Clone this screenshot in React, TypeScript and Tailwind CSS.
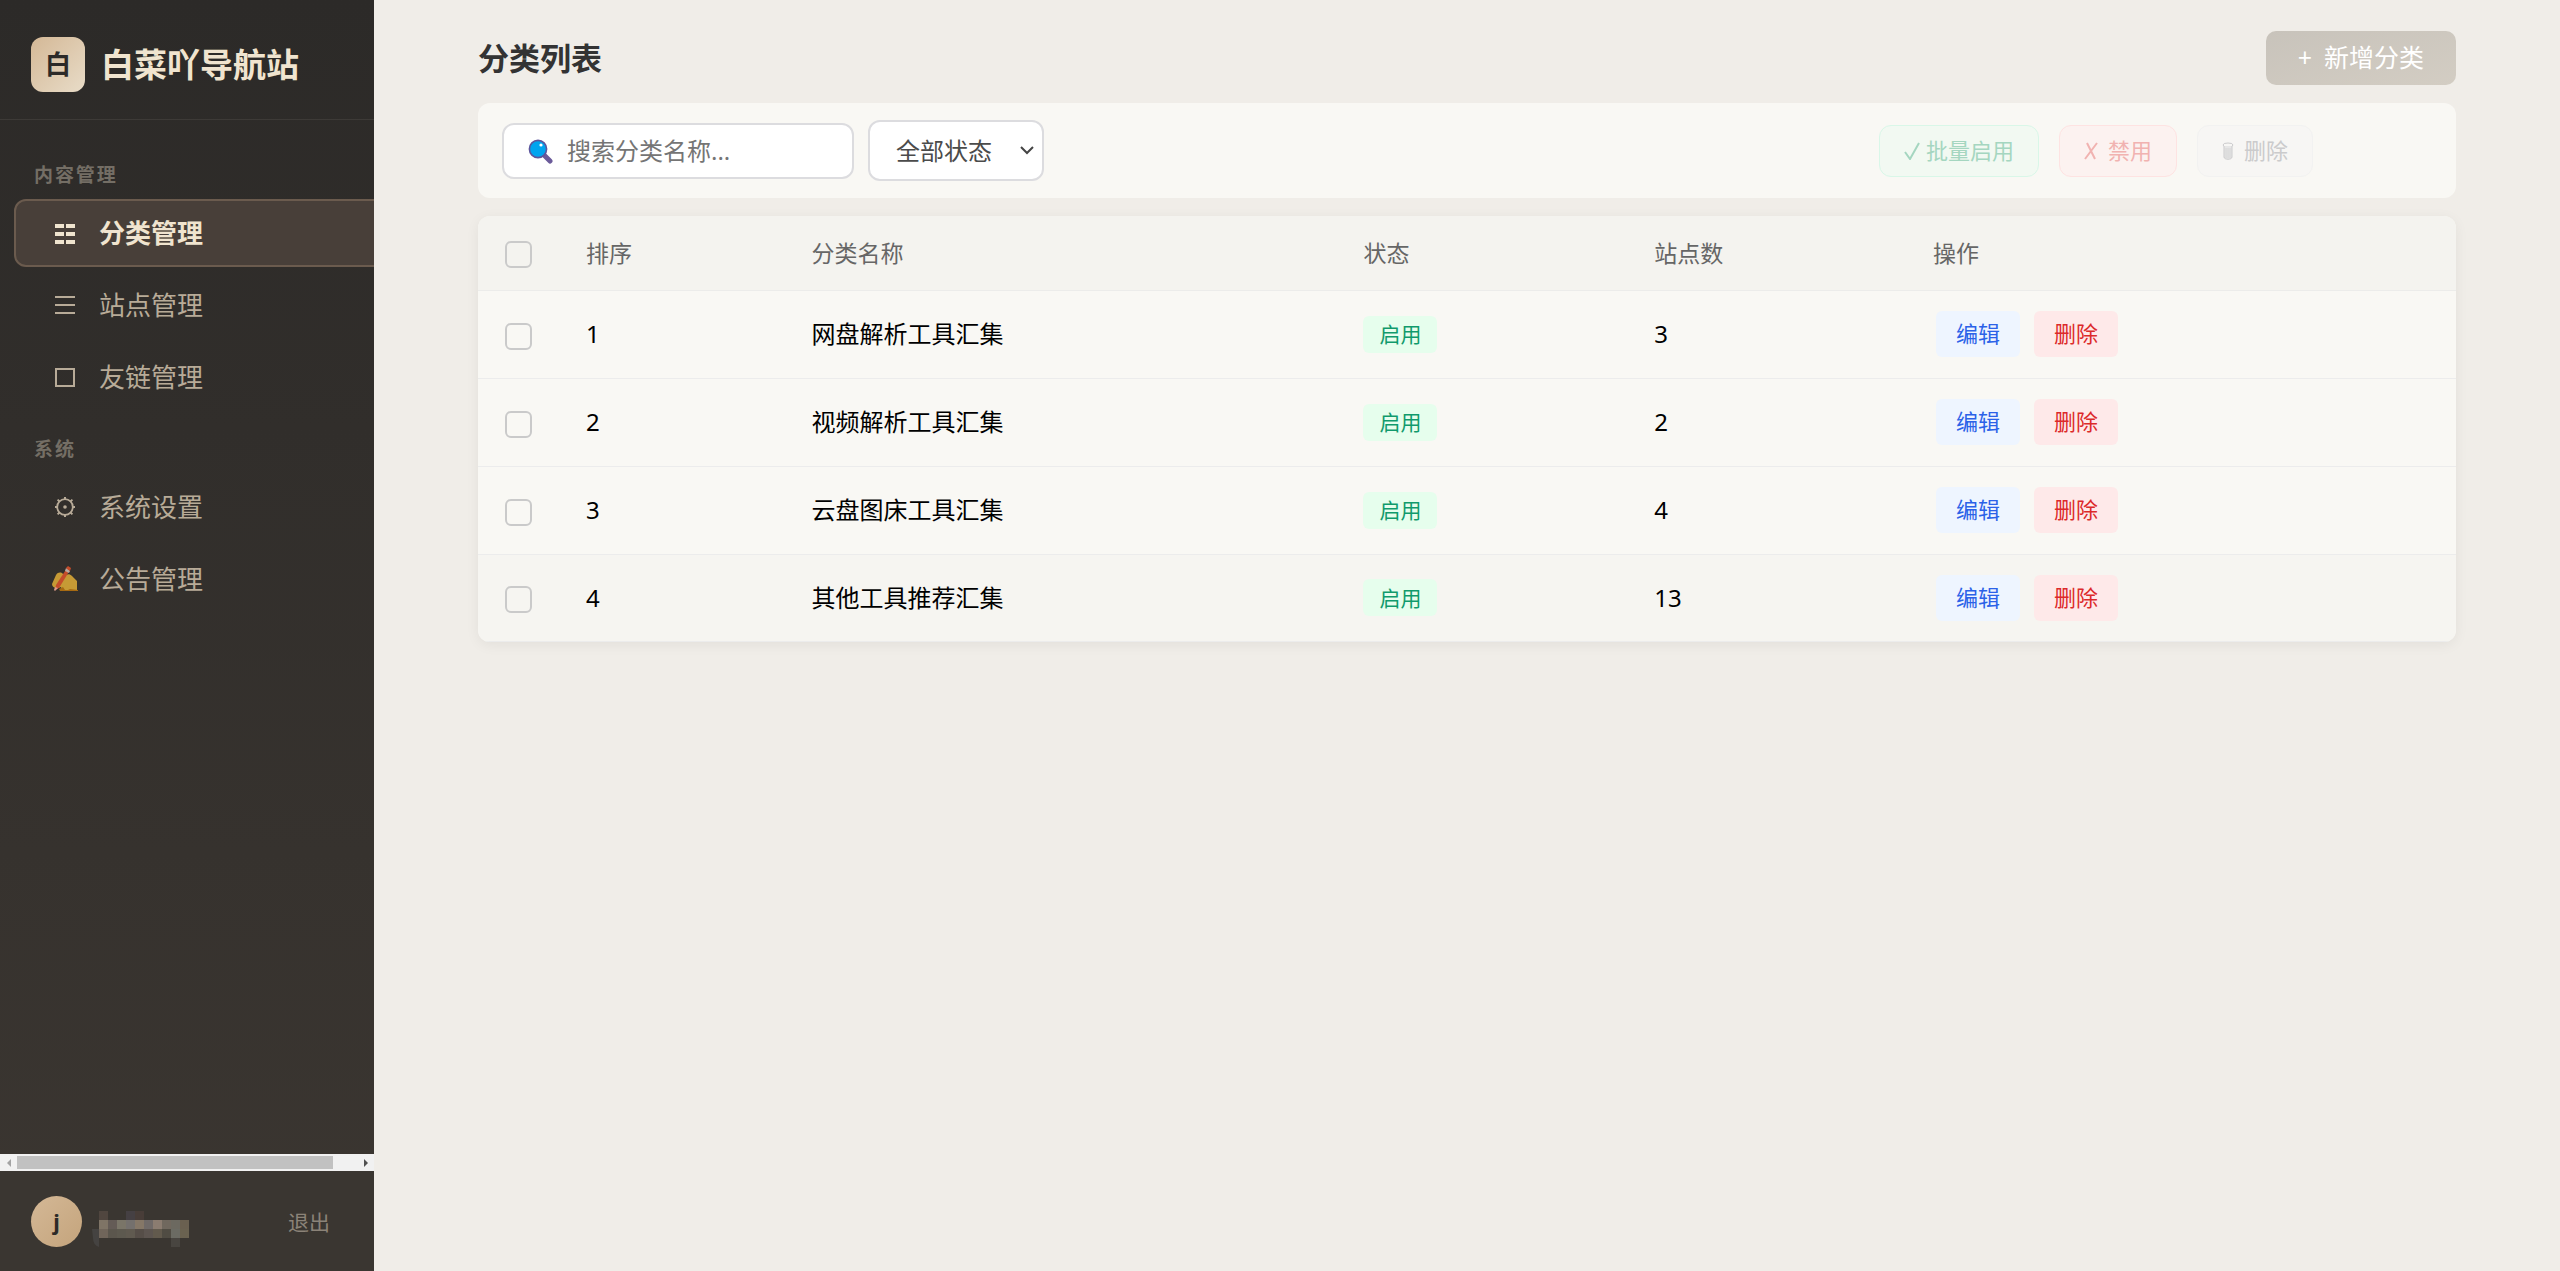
import { useState } from "react"
import type { ReactNode } from "react"

type Category = {
    id: number
    name: string
    sites: number
}

const categories: Category[] = [
    { id: 1, name: "网盘解析工具汇集", sites: 3 },
    { id: 2, name: "视频解析工具汇集", sites: 2 },
    { id: 3, name: "云盘图床工具汇集", sites: 4 },
    { id: 4, name: "其他工具推荐汇集", sites: 13 },
]

const CategoryIcon = () => (
    <svg viewBox="0 0 22 22" className="h-[22px] w-[22px]" fill="currentColor">
        <path d="M1 2h9v4H1zM12 2h9v4h-9zM1 10h9v4H1zM12 10h9v4h-9zM1 18h9v4H1zM12 18h9v4h-9z" />
    </svg>
)

const SiteIcon = () => (
    <svg viewBox="0 0 22 22" className="h-[22px] w-[22px]" fill="currentColor">
        <path d="M1 2h20v2H1zM1 10h20v2H1zM1 18h20v2H1z" />
    </svg>
)

const LinkIcon = () => (
    <svg viewBox="0 0 22 22" className="h-[22px] w-[22px]" fill="none" stroke="currentColor" strokeWidth="2">
        <path d="M2 3h18v17H2z" />
    </svg>
)

const SettingsIcon = () => (
    <svg viewBox="0 0 22 22" className="h-[22px] w-[22px]" fill="none" stroke="currentColor">
        <circle cx="11" cy="11" r="7.8" strokeWidth="1.8" />
        <circle cx="11" cy="11" r="1.8" fill="currentColor" stroke="none" />
        <path
            strokeWidth="2"
            d="M11 1v3M11 18v3M1 11h3M18 11h3M3.6 3.6l2 2M16.4 16.4l2 2M3.6 18.4l2-2M16.4 5.6l2-2"
        />
    </svg>
)

const NoticeIcon = () => (
    <svg viewBox="0 0 26 26" className="h-[26px] w-[26px]">
        <path d="M0 18L4 9c2-3 5-3 7-1l3 1c2-1 4-1 6 1l5 5v10H10l-1-4c-4 2-9 1-9-3z" fill="#c69a35" />
        <path d="M7 23l4-2 2 3h3l2-1 8 1v1H8z" fill="#a66a12" />
        <path d="M15 2l3 2L7 22l-4 2 1-5z" fill="#c44c2a" />
        <path d="M13 5l4 2 1-2-4-3z" fill="#b9a8a0" />
        <path d="M16 0l3 2-1 3-4-3z" fill="#c44c2a" />
        <path d="M3 21l3 1-3 3-1-1z" fill="#dc9a88" />
    </svg>
)

const SearchIcon = () => (
    <svg viewBox="0 0 26 26" className="h-[26px] w-[26px]">
        <path d="M16 17l6 6" stroke="#6b5b9a" strokeWidth="5" strokeLinecap="round" />
        <circle cx="10" cy="11" r="8.6" fill="#00a4ef" stroke="#5c559c" strokeWidth="1.6" />
        <circle cx="13" cy="7" r="1.6" fill="#fff" />
    </svg>
)

const TrashIcon = () => (
    <svg viewBox="0 0 12 18" className="h-[18px] w-3" fill="none" stroke="currentColor">
        <ellipse cx="6" cy="3" rx="5" ry="2" />
        <path d="M2 4v11c0 3 8 3 8 0V4" fill="#e6e6e6" />
        <path d="M4 6v10M6 6v10M8 6v10" strokeOpacity="0.6" />
    </svg>
)

const NavGroup = ({ title, children }: { title: string; children: ReactNode }) => (
    <section>
        <h2 className="mb-2.5 pl-5 text-[19px] leading-7 font-bold tracking-widest text-[#746e65]">{title}</h2>
        <ul className="flex flex-col gap-1">{children}</ul>
    </section>
)

const NavItem = ({ icon, label, active = false }: { icon: ReactNode; label: string; active?: boolean }) => (
    <li>
        <a
            href="#"
            aria-current={active ? "page" : undefined}
            className={
                active
                    ? "flex h-[68px] items-center rounded-xl border-2 border-[#6b5b4e] bg-[#483f39] pl-[33px] text-[26px] font-bold text-[#f0e4cf]"
                    : "flex h-[68px] items-center rounded-xl border-2 border-transparent pl-[33px] text-[26px] text-[#b8ab98]"
            }
        >
            <span className="mr-[18px] flex w-8 justify-center">{icon}</span>
            {label}
        </a>
    </li>
)

// Mosaic over the account name, one entry per 9px tile
const mosaic = [
    ["#50463f", "", "", "#454043", "#483d38", "", "", "", "", ""],
    ["#7f7466", "#645b56", "#7a7568", "#74706d", "#857767", "#706a68", "#8b7c70", "#70685e", "#6c6960", "#6a6050"],
    ["#70655a", "#5b564d", "#5d594f", "#605a50", "#564e48", "#5d5550", "#625a4d", "#504c43", "#6b6b63", "#6a6250"],
    ["", "", "", "", "", "", "", "", "#484540", ""],
]

const AccountName = () => (
    <svg viewBox="0 0 97 36" className="h-9 w-[97px]" role="img" aria-label="用户名">
        <path d="M0 18h7v18Q1 34 1 27z" fill="#454341" />
        {mosaic.map((row, y) =>
            row.map((fill, x) => fill && <rect key={`${x}-${y}`} x={7 + x * 9} y={y * 9} width="9" height="9" fill={fill} />)
        )}
    </svg>
)

const Sidebar = () => (
    <aside className="flex w-[374px] shrink-0 flex-col overflow-hidden bg-linear-to-b from-[#2c2a28] to-[#3b3631]">
        <div className="flex h-[120px] items-center gap-4 border-b border-[#3d3a37] pt-2.5 pl-[31px]">
            <span className="flex h-[55px] w-[54px] items-center justify-center rounded-xl bg-linear-to-br from-[#d4b896] to-[#e8dcc8] text-[26px] font-bold text-[#2c2a28]">
                白
            </span>
            <span className="text-[33px] font-bold text-[#f0e4cf]">白菜吖导航站</span>
        </div>
        <nav className="-mr-7 flex flex-1 flex-col gap-6 pt-[41px] pl-3.5">
            <NavGroup title="内容管理">
                <NavItem icon={<CategoryIcon />} label="分类管理" active />
                <NavItem icon={<SiteIcon />} label="站点管理" />
                <NavItem icon={<LinkIcon />} label="友链管理" />
            </NavGroup>
            <NavGroup title="系统">
                <NavItem icon={<SettingsIcon />} label="系统设置" />
                <NavItem icon={<NoticeIcon />} label="公告管理" />
            </NavGroup>
        </nav>
        <div className="flex h-[17px] items-center bg-[#f1f1f1]">
            <button aria-label="向左滚动" className="flex w-[17px] justify-center text-[#a3a3a3]">
                <svg viewBox="0 0 4 8" className="h-2 w-1" fill="currentColor">
                    <path d="M4 0v8L0 4z" />
                </svg>
            </button>
            <div className="flex-1">
                <div className="h-[13px] w-[93%] bg-[#c1c1c1]" />
            </div>
            <button aria-label="向右滚动" className="flex w-[17px] justify-center text-[#505050]">
                <svg viewBox="0 0 4 8" className="h-2 w-1" fill="currentColor">
                    <path d="M0 0v8l4-4z" />
                </svg>
            </button>
        </div>
        <div className="flex h-[100px] items-center bg-[#3a3631] pr-11 pl-[31px]">
            <span className="flex h-[51px] w-[51px] items-center justify-center rounded-full bg-linear-to-br from-[#d4b896] to-[#c4a47c] text-[22px] font-bold text-[#2c2a28]">
                j
            </span>
            <div className="mt-4 ml-2.5">
                <AccountName />
            </div>
            <button className="mt-1 ml-auto text-[21px] text-[#8b8378]">退出</button>
        </div>
    </aside>
)

const Checkbox = ({ label, checked, onChange }: { label: string; checked: boolean; onChange: () => void }) => (
    <input
        type="checkbox"
        aria-label={label}
        checked={checked}
        onChange={onChange}
        className="mt-1 block h-[27px] w-[27px] appearance-none rounded-md border-2 border-[#cacaca] checked:bg-[#b8ab98]"
    />
)

const Toolbar = () => (
    <div className="flex h-[95px] items-center rounded-xl bg-[#f9f8f4] px-6">
        <label className="flex h-14 w-[352px] items-center rounded-xl border-2 border-[#dcdcdf] bg-white pl-6">
            <SearchIcon />
            <input
                type="text"
                aria-label="搜索分类名称"
                placeholder="搜索分类名称..."
                className="ml-[13px] min-w-0 flex-1 text-2xl outline-none placeholder:text-[#757575]"
            />
        </label>
        <div className="relative ml-3.5">
            <select
                aria-label="状态"
                className="h-[61px] w-44 appearance-none rounded-xl border-2 border-[#dcdcdf] bg-white pl-[26px] text-2xl text-[#4b4b4b]"
            >
                <option>全部状态</option>
                <option>启用</option>
                <option>禁用</option>
            </select>
            <svg
                viewBox="0 0 14 9"
                className="pointer-events-none absolute top-[26px] right-2.5 h-[9px] w-3.5"
                fill="none"
                stroke="#444"
                strokeWidth="2"
            >
                <path d="M1 1l6 6 6-6" />
            </svg>
        </div>
        <div className="mr-[119px] ml-auto flex gap-5 text-[22px]">
            <button
                disabled
                className="flex h-[52px] items-center gap-1.5 rounded-xl border border-[#d9f7e8] bg-[#f2f9f2] px-6 text-[#a5d6c0]"
            >
                <svg viewBox="0 0 16 18" className="h-[18px] w-4" fill="none" stroke="currentColor" strokeWidth="2">
                    <path d="M1 10l5 7L15 1" />
                </svg>
                批量启用
            </button>
            <button
                disabled
                className="flex h-[52px] items-center gap-2.5 rounded-xl border border-[#fee3e2] bg-[#fcf2f0] px-6 text-[#f1b3b1]"
            >
                <svg viewBox="0 0 14 18" className="h-[18px] w-3.5" fill="none" stroke="currentColor" strokeWidth="2">
                    <path d="M3 1l8 16M13 1L1 17" />
                </svg>
                禁用
            </button>
            <button
                disabled
                className="flex h-[52px] items-center gap-2.5 rounded-xl border border-[#f2f2f1] bg-[#f7f6f4] px-6 text-[#cbcbcc]"
            >
                <TrashIcon />
                删除
            </button>
        </div>
    </div>
)

const CategoryTable = () => {
    const [selected, setSelected] = useState<number[]>([])
    const allSelected = selected.length === categories.length

    const toggle = (id: number) => {
        setSelected(selected.includes(id) ? selected.filter((item) => item !== id) : [...selected, id])
    }

    return (
        <div className="overflow-hidden rounded-xl bg-[#f9f8f4] shadow-[0_3px_14px_rgba(0,0,0,0.06)]">
            <table className="w-full table-fixed text-left">
                <colgroup>
                    <col className="w-[4.1%]" />
                    <col className="w-[11.4%]" />
                    <col className="w-[27.9%]" />
                    <col className="w-[14.7%]" />
                    <col className="w-[14.1%]" />
                    <col />
                </colgroup>
                <thead>
                    <tr className="h-[74px] border-b border-[#ececea] bg-[#f4f3ef] text-[23px] text-[#666]">
                        <th className="pl-[27px]">
                            <Checkbox
                                label="全选"
                                checked={allSelected}
                                onChange={() => setSelected(allSelected ? [] : categories.map((item) => item.id))}
                            />
                        </th>
                        <th className="pl-[27px] font-normal">排序</th>
                        <th className="pl-[27px] font-normal">分类名称</th>
                        <th className="pl-[27px] font-normal">状态</th>
                        <th className="pl-[27px] font-normal">站点数</th>
                        <th className="pl-[27px] font-normal">操作</th>
                    </tr>
                </thead>
                <tbody>
                    {categories.map((item) => (
                        <tr
                            key={item.id}
                            className="h-[88px] border-b border-[#ececec] text-2xl text-black last:h-[87px] last:bg-[#f6f5f1]"
                        >
                            <td className="pl-[27px]">
                                <Checkbox
                                    label={item.name}
                                    checked={selected.includes(item.id)}
                                    onChange={() => toggle(item.id)}
                                />
                            </td>
                            <td className="pl-[27px]">{item.id}</td>
                            <td className="pl-[27px]">{item.name}</td>
                            <td className="pl-[27px]">
                                <span className="inline-flex h-[37px] items-center rounded-md bg-[#e6feed] px-4 text-[21px] text-[#119a6c]">
                                    启用
                                </span>
                            </td>
                            <td className="pl-[27px]">{item.sites}</td>
                            <td className="pl-[30px]">
                                <div className="flex gap-3.5 text-[22px]">
                                    <button className="h-[46px] rounded-md bg-[#eef5ff] px-5 text-[#2b62e8]">编辑</button>
                                    <button className="h-[46px] rounded-md bg-[#fee9e9] px-5 text-[#dc2a2a]">删除</button>
                                </div>
                            </td>
                        </tr>
                    ))}
                </tbody>
            </table>
        </div>
    )
}

export default function App() {
    return (
        <div className="flex min-h-screen bg-[#f0ede8] font-['Noto_Sans','Noto_Sans_CJK_SC',sans-serif]">
            <Sidebar />
            <main className="flex min-w-0 flex-1 flex-col px-[104px] pt-[31px]">
                <header className="mb-[18px] flex items-center justify-between">
                    <h1 className="text-[31px] font-bold text-[#333]">分类列表</h1>
                    <button className="flex h-[54px] items-center gap-3 rounded-[10px] bg-linear-to-br from-[#c8c3bb] to-[#d3cdc3] px-8 text-[25px] text-white">
                        <span>+</span>
                        新增分类
                    </button>
                </header>
                <Toolbar />
                <div className="mt-[18px]">
                    <CategoryTable />
                </div>
            </main>
        </div>
    )
}
